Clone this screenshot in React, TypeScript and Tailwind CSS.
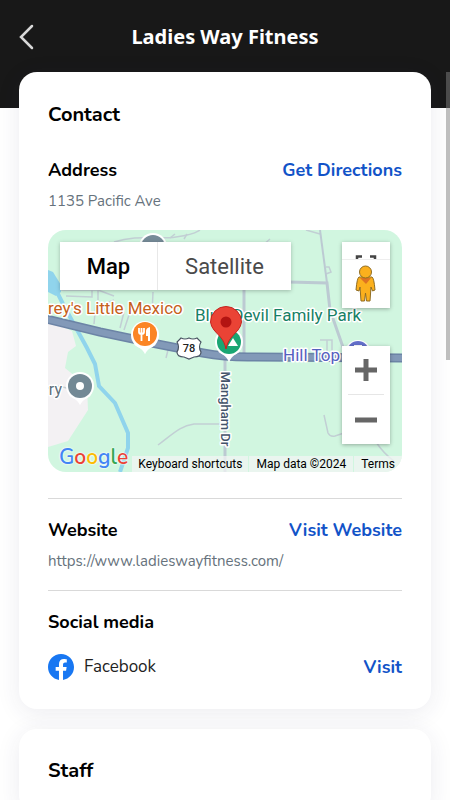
import React from "react";

const labelClass = "font-['Roboto',sans-serif] [paint-order:stroke]";

function MapDrawing() {
  return (
    <svg
      className="block h-full w-full"
      viewBox="0 0 354 242"
      preserveAspectRatio="xMidYMid slice"
      role="img"
      aria-label="Map around 1135 Pacific Ave"
    >
      <rect width="354" height="242" fill="#d1f6e0" />
      <path d="M0 90L24 101L28 116L20 122L17 138L39 156L40 180L20 211L0 217Z" fill="#f3f1f3" />

      {/* minor roads */}
      <g fill="none" stroke="#c2cfd4" strokeWidth="1.5">
        <path d="M66 12C90 4 108 10 128 7S148 2 152 0" />
        <path d="M122 8L127 4M136 9L139 4" />
        <path d="M6 60H50V70M50 60L66 66M48 72L46 94M76 100L82 82L90 76M72 98L76 82M105 62L104 84M18 66L44 67V60M52 76L66 70" />
        <path d="M110 215C126 203 132 196 146 194H175" />
        <path d="M207 15H215L222 9M258 0L272 4" />
        <path d="M278 37H281L283 42L278 44" />
        <path d="M276 185L280 203Q282 207 287 206L296 203" />
        <path d="M328 212Q336 224 346 231" />
        <path d="M272 110H284V124M279 110V122M118 128L120 120" />
        <path d="M0 158L12 156L28 161" />
      </g>
      <g fill="none" stroke="#bccad2">
        <path d="M196 60V127M177 128V242" strokeWidth="3" />
        <path d="M240 52L279 53L282 80L296 120" strokeWidth="3" />
        <path d="M272 0L279 53" strokeWidth="2" />
      </g>

      {/* stream and pond */}
      <path d="M0 40L5 42L13 55V62L8 66L0 62Z" fill="#90d4ec" />
      <path
        d="M8 60L16 76L39 118L47 134L51 156L67 173L80 203V218L72 242"
        fill="none"
        stroke="#90d4ec"
        strokeWidth="4"
      />

      {/* highway */}
      <path
        d="M-2 89L52 102L109 114L155 123Q176 127 200 127L356 128"
        fill="none"
        stroke="#6c84a6"
        strokeWidth="9"
      />
      <path
        d="M-2 89L52 102L109 114L155 123Q176 127 200 127L356 128"
        fill="none"
        stroke="#8299b8"
        strokeWidth="6"
      />

      {/* slate place marker */}
      <circle cx="105" cy="17" r="14" fill="#fff" />
      <circle cx="105" cy="17" r="12" fill="#768b98" />

      {/* restaurant */}
      <path d="M97 122Q95 118 87 114H107Q99 118 97 122Z" fill="#fff" stroke="#fff" strokeWidth="2" />
      <circle cx="97" cy="105" r="14" fill="#fff" />
      <circle cx="97" cy="104" r="12" fill="#fb8525" />
      <path
        d="M91 98V102Q91 104 93.500 104T96 102V98M93.500 98V111"
        fill="none"
        stroke="#fff"
        strokeWidth="1.800"
      />
      <path d="M100 111V106H98V101Q98 98 102 97V111Z" fill="#fff" />

      {/* route shield */}
      <path
        d="M133 108Q137 110 141 108Q145 110 149 108L153 112Q150 117 153 122Q153 127 146 127L141 129L136 127Q129 127 129 122Q132 117 129 112Z"
        fill="#fff"
        stroke="#4a5563"
        strokeWidth="1.200"
      />
      <text x="141" y="122" textAnchor="middle" fontSize="11" fontWeight="500" fill="#222" className={labelClass}>
        78
      </text>

      {/* grey place marker */}
      <path d="M32 173Q30 169 22 165H42Q34 169 32 173Z" fill="#fff" stroke="#fff" strokeWidth="2" />
      <circle cx="32" cy="156" r="14" fill="#fff" />
      <circle cx="32" cy="156" r="12" fill="#738995" />
      <circle cx="32" cy="156" r="4" fill="#fff" />

      {/* transit marker */}
      <circle cx="310" cy="123" r="13" fill="#fff" />
      <circle cx="310" cy="122" r="11" fill="#6470cb" />
      <path d="M306 115H314V124H306Z" fill="#fff" />

      <g className={labelClass} stroke="#fff" strokeLinejoin="round">
        <text x="0" y="84" fontSize="17" strokeWidth="3" fill="#c5601b">
          rey's Little Mexico
        </text>
        <text x="230" y="91" textAnchor="middle" fontSize="17" strokeWidth="3" fill="#178065">
          Blue Devil Family Park
        </text>
        <text x="292" y="131" textAnchor="end" fontSize="17" strokeWidth="3" fill="#5560bf">
          Hill Top
        </text>
        <text x="14" y="165" textAnchor="end" fontSize="16" strokeWidth="3" fill="#5d6f7a">
          ry
        </text>
        <text
          transform="translate(173 179) rotate(90)"
          textAnchor="middle"
          fontSize="13"
          fontWeight="500"
          strokeWidth="3"
          fill="#44546b"
        >
          Mangham Dr
        </text>
      </g>

      {/* park marker */}
      <path d="M181 130Q179 125 171 121H191Q183 125 181 130Z" fill="#fff" stroke="#fff" strokeWidth="2" />
      <circle cx="181" cy="112" r="14" fill="#fff" />
      <circle cx="181" cy="112" r="12" fill="#1aa673" />
      <path d="M185 108L190 116H180Z" fill="#fff" />

      {/* selected location */}
      <path
        d="M178 119C176 109 171 106 166 100A15 15 0 0 1 162.500 92A15.500 15.500 0 0 1 193.500 92A15 15 0 0 1 190 100C185 106 180 109 178 119Z"
        fill="#ea4335"
        stroke="#c5221f"
        strokeWidth="1"
      />
      <circle cx="178" cy="92" r="5.500" fill="#b31412" />
    </svg>
  );
}

function Pegman() {
  return (
    <svg className="block" width="48" height="66" viewBox="0 0 48 66" aria-hidden="true">
      <path d="M15 17V14.500H20M28 14.500H33V17" fill="none" stroke="#444" strokeWidth="2.500" />
      <path d="M0 17.500H48" stroke="#eee" strokeWidth="1" />
      <path
        d="M17 35Q15 36 14 48L17 49L18 45L19 59H22.500L23.500 51L24.500 59H28L29 45L30.500 49L33 48Q32 36 30 35Z"
        fill="#fbb01d"
        stroke="#8f6c22"
        strokeWidth="1"
      />
      <path d="M18 36H29L24 42Z" fill="#de7322" />
      <circle cx="23.500" cy="30" r="6" fill="#fbb01d" stroke="#8f6c22" strokeWidth="1" />
    </svg>
  );
}

function GoogleMap() {
  return (
    <div className="relative mt-[19px] h-[242px] overflow-hidden rounded-[18px] font-['Roboto',sans-serif]">
      <MapDrawing />
      <div className="absolute left-3 top-3 flex h-12 bg-white text-[22px] shadow-[0_1px_4px_rgba(0,0,0,0.25)]">
        <button className="w-[98px] border-r border-[#e8e8e8] font-medium text-black">Map</button>
        <button className="w-[133px] text-[#4a4a4a]">Satellite</button>
      </div>
      <button
        aria-label="Street View"
        className="absolute right-3 top-3 bg-white shadow-[0_1px_4px_rgba(0,0,0,0.3)]"
      >
        <Pegman />
      </button>
      <div className="absolute right-3 top-[116px] flex w-12 flex-col bg-white px-[6px] shadow-[0_1px_4px_rgba(0,0,0,0.3)]">
        <button aria-label="Zoom in" className="flex h-[49px] items-center justify-center border-b border-[#e6e6e6]">
          <svg width="22" height="22" viewBox="0 0 22 22" aria-hidden="true">
            <path d="M0 11H22M11 0V22" stroke="#666" strokeWidth="5" />
          </svg>
        </button>
        <button aria-label="Zoom out" className="flex h-[49px] items-center justify-center">
          <svg width="22" height="22" viewBox="0 0 22 22" aria-hidden="true">
            <path d="M0 11H22" stroke="#666" strokeWidth="5" />
          </svg>
        </button>
      </div>
      <a
        href="#google"
        className="absolute bottom-0 left-[11px] font-['Nunito','Lato',sans-serif] text-[21px] font-semibold leading-[30px] [text-shadow:0_0_2px_white,0_0_2px_white]"
      >
        <span className="text-[#4285f4]">G</span>
        <span className="text-[#ea4335]">o</span>
        <span className="text-[#fbbc05]">o</span>
        <span className="text-[#4285f4]">g</span>
        <span className="text-[#34a853]">l</span>
        <span className="text-[#ea4335]">e</span>
      </a>
      <div className="absolute bottom-0 right-0 flex gap-px text-[12px] leading-4 text-black">
        <button className="bg-[#f5f5f5]/70 px-[6px]">Keyboard shortcuts</button>
        <span className="bg-[#f5f5f5]/70 px-[7px]">Map data ©2024</span>
        <a href="#terms" className="bg-[#f5f5f5]/70 px-[7px]">
          Terms
        </a>
      </div>
    </div>
  );
}

function ActionRow({ title, action }: { title: string; action: string }) {
  return (
    <div className="flex items-center justify-between text-[18px] font-bold leading-7">
      <h3 className="text-black">{title}</h3>
      <a href="#action" className="text-[#1253c8]">
        {action}
      </a>
    </div>
  );
}

const cardClass = "rounded-[18px] bg-white px-[29px] shadow-[0_4px_24px_rgba(40,40,90,0.09)]";

export default function App() {
  return (
    <div className="h-screen overflow-hidden bg-white font-['Nunito','Open_Sans',sans-serif]">
      <header className="h-[108px] bg-[#181818]">
        <div className="grid h-[74px] grid-cols-[48px_1fr_48px] items-center">
          <button aria-label="Back" className="pl-[18px] text-[#d8d8d8]">
            <svg width="16" height="26" viewBox="0 0 16 26" fill="none" aria-hidden="true">
              <path d="M14 2L3 13L14 24" stroke="currentColor" strokeWidth="2.500" strokeLinecap="round" />
            </svg>
          </button>
          <h1 className="text-center font-['Noto_Sans',sans-serif] text-[20px] font-bold text-white">
            Ladies Way Fitness
          </h1>
        </div>
      </header>
      <main className="-mt-9 flex flex-col gap-5 px-[19px]">
        <section className={`${cardClass} pb-7 pt-[29px]`}>
          <h2 className="mb-[27px] text-[20px] font-bold leading-7 text-black">Contact</h2>
          <ActionRow title="Address" action="Get Directions" />
          <p className="mt-[7px] text-[15px] leading-5 text-[#66727c]">1135 Pacific Ave</p>
          <GoogleMap />
          <hr className="mb-[17px] mt-[26px] border-[#d9d9d9]" />
          <ActionRow title="Website" action="Visit Website" />
          <p className="mt-[7px] text-[15px] leading-5 text-[#66727c]">https://www.ladieswayfitness.com/</p>
          <hr className="mb-[17px] mt-[19px] border-[#d9d9d9]" />
          <h3 className="text-[18px] font-bold leading-7 text-black">Social media</h3>
          <div className="mt-[17px] flex items-center leading-7">
            <svg width="26" height="26" viewBox="0 0 24 24" aria-hidden="true">
              <circle cx="12" cy="12" r="11" fill="#fff" />
              <path
                fill="#1877f2"
                d="M24 12.073C24 5.405 18.627 0 12 0S0 5.405 0 12.073C0 18.100 4.388 23.094 10.125 24v-8.437H7.078v-3.490h3.047V9.413c0-3.026 1.792-4.697 4.533-4.697 1.312 0 2.686.236 2.686.236v2.971h-1.513c-1.491 0-1.956.93-1.956 1.886v2.264h3.328l-.532 3.490h-2.796V24C19.612 23.094 24 18.100 24 12.073z"
              />
            </svg>
            <span className="ml-[10px] text-[17px] text-[#222]">Facebook</span>
            <a href="#facebook" className="ml-auto text-[18px] font-bold text-[#1253c8]">
              Visit
            </a>
          </div>
        </section>
        <section className={`${cardClass} py-7`}>
          <h2 className="text-[20px] font-bold leading-7 text-black">Staff</h2>
        </section>
      </main>
      <div aria-hidden="true" className="fixed right-0 top-[72px] h-[288px] w-1 bg-[#808080]/50" />
    </div>
  );
}
